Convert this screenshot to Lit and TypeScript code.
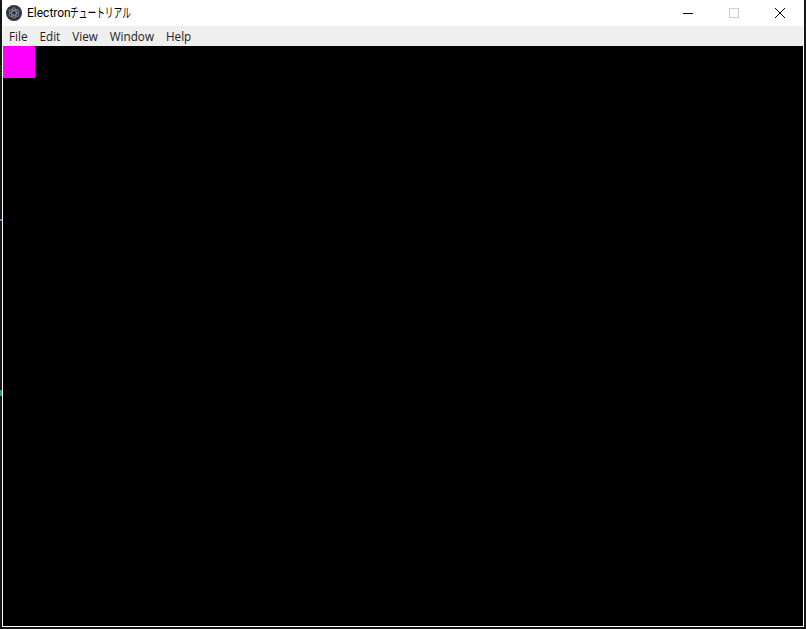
import { LitElement, html, css } from "lit";
import { customElement } from "lit/decorators.js";

@customElement("app-root")
export class AppRoot extends LitElement {
  static styles = css`
    :host {
      display: block;
      position: relative;
      width: 806px;
      height: 629px;
      background: #161616;
      overflow: hidden;
    }
    .speck {
      position: absolute;
      left: 0;
      width: 2px;
    }
    .speck.blue {
      top: 219px;
      height: 2px;
      background: #4a8fd0;
    }
    .speck.teal {
      top: 390px;
      height: 6px;
      background: #2f9a80;
    }
    .speck.olive {
      top: 66px;
      height: 10px;
      background: repeating-linear-gradient(#343a2c 0 1px, #1b1d18 1px 3px);
    }
    .window {
      box-sizing: border-box;
      width: 802px;
      height: 627px;
      margin-left: 2px;
      border: 1px solid #fff;
      border-top: 0;
      display: flex;
      flex-direction: column;
      background: #fff;
    }
    .title {
      height: 26px;
      flex: none;
      display: flex;
      align-items: center;
      background: #fff;
      padding-left: 3px;
    }
    .logo {
      width: 16px;
      height: 16px;
      flex: none;
      display: block;
      margin-right: 5px;
    }
    .name {
      font-family: Roboto, "Open Sans", sans-serif;
      font-size: 12px;
      color: #000;
      white-space: nowrap;
      flex: 1;
      display: flex;
      align-items: center;
    }
    .kana {
      display: block;
      width: 60px;
      margin-left: -1px;
      margin-top: -2px;
      font-family: "Noto Sans CJK JP", sans-serif;
      font-size: 13px;
      line-height: 14px;
      transform: scaleX(0.67);
      transform-origin: left center;
    }
    .controls {
      display: flex;
      height: 26px;
    }
    .ctl {
      width: 46px;
      height: 26px;
      display: flex;
      align-items: center;
      justify-content: center;
    }
    .ctl svg {
      width: 10px;
      height: 10px;
      display: block;
    }
    .menu {
      height: 20px;
      flex: none;
      display: flex;
      align-items: center;
      background: #efefef;
      padding-left: 6px;
      gap: 12px;
      font-family: "Open Sans", "Noto Sans", sans-serif;
      font-size: 11.7px;
      color: #222;
    }
    .content {
      flex: 1;
      background: #000;
    }
    .square {
      width: 32px;
      height: 32px;
      background: #ff00ff;
    }
  `;

  render() {
    return html`
      <div class="speck olive"></div>
      <div class="speck blue"></div>
      <div class="speck teal"></div>
      <div class="window">
        <div class="title">
          <svg class="logo" viewBox="0 0 16 16" aria-hidden="true">
            <circle cx="8" cy="8" r="8" fill="#30333f"></circle>
            <g fill="none" stroke="#8f9ba6" stroke-width="0.8">
              <ellipse cx="8" cy="8" rx="5.4" ry="2.3" transform="rotate(30 8 8)"></ellipse>
              <ellipse cx="8" cy="8" rx="5.4" ry="2.3" transform="rotate(90 8 8)"></ellipse>
              <ellipse cx="8" cy="8" rx="5.4" ry="2.3" transform="rotate(150 8 8)"></ellipse>
            </g>
          </svg>
          <span class="name">Electron<span class="kana">チュートリアル</span></span>
          <div class="controls">
            <div class="ctl">
              <svg viewBox="0 0 10 10"><path d="M0 5.5H10" stroke="#000" fill="none"></path></svg>
            </div>
            <div class="ctl">
              <svg viewBox="0 0 10 10"><rect x="0.5" y="0.5" width="9" height="9" stroke="#ccc" fill="none"></rect></svg>
            </div>
            <div class="ctl">
              <svg viewBox="0 0 10 10"><path d="M0 0L10 10M10 0L0 10" stroke="#000" stroke-width="1" fill="none"></path></svg>
            </div>
          </div>
        </div>
        <div class="menu">
          <span>File</span><span>Edit</span><span>View</span><span>Window</span><span>Help</span>
        </div>
        <div class="content"><div class="square"></div></div>
      </div>
    `;
  }
}
